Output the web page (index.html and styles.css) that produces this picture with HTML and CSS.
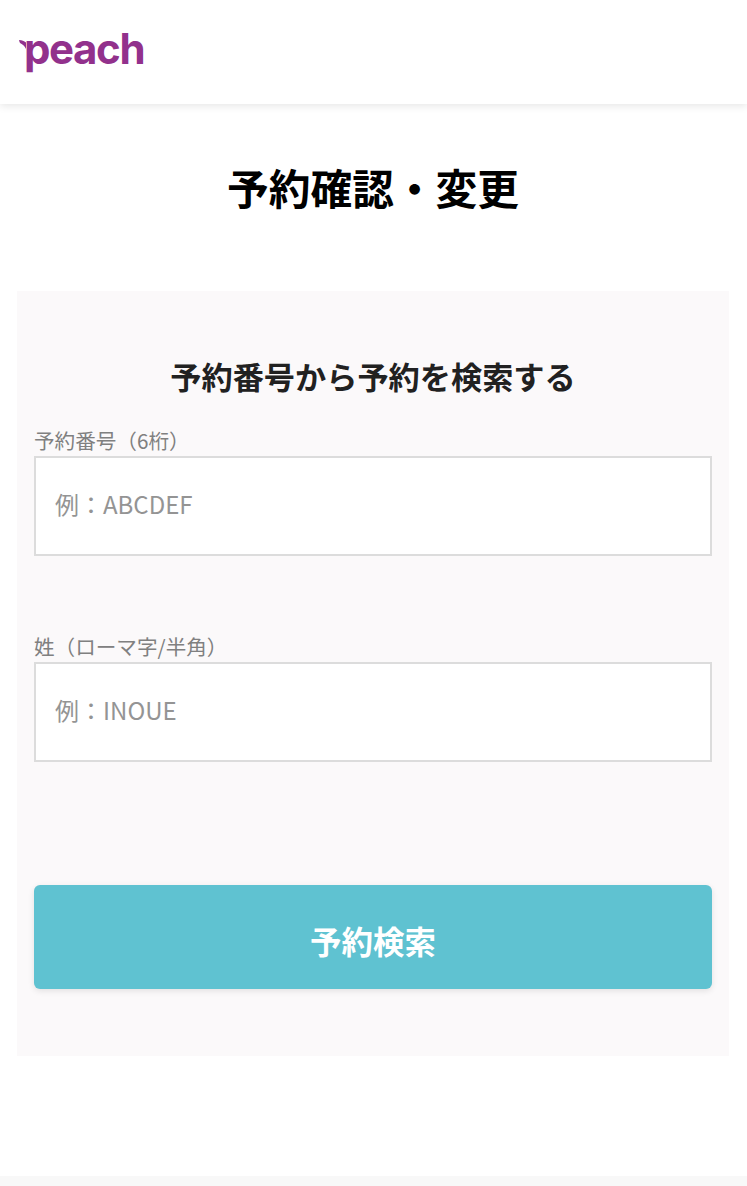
FILE: index.html
```html
<!DOCTYPE html>
<html lang="ja">
<head>
    <meta charset="UTF-8">
    <meta name="viewport" content="width=device-width, initial-scale=1.0">
    <title>予約確認・変更</title>
    <link rel="stylesheet" href="styles.css">
</head>
<body>
    <header class="site-header">
        <a class="logo" href="#">
            <svg class="logo-leaf" width="10" height="9" viewBox="0 0 10 9" aria-hidden="true">
                <path d="M0 0 C3 0 5 1 7 2.5 L7 9 C6 6 3 4 1 3 C0.5 2 0.2 1 0 0 Z" fill="#92318c"/>
            </svg>
            <span class="logo-text">peach</span>
        </a>
    </header>

    <main class="page">
        <h1 class="page-title">予約確認・変更</h1>

        <form class="search-panel">
            <h2 class="panel-title">予約番号から予約を検索する</h2>

            <div class="field">
                <label class="field-label" for="pnr">予約番号（6桁）</label>
                <input class="field-input" id="pnr" type="text" placeholder="例：ABCDEF">
            </div>

            <div class="field field-second">
                <label class="field-label" for="lastName">姓（ローマ字/半角）</label>
                <input class="field-input" id="lastName" type="text" placeholder="例：INOUE">
            </div>

            <button class="search-button" type="button">予約検索</button>
        </form>
    </main>

    <footer class="site-footer"></footer>
</body>
</html>
```

FILE: styles.css
```css
* {
    box-sizing: border-box;
}
body {
    margin: 0;
    background: #fff;
    color: #000;
    font-family: "Noto Sans CJK JP", "Noto Sans", sans-serif;
}
.site-header {
    height: 104px;
    padding: 24px 0 0 19px;
    background: #fff;
    box-shadow: 0 2px 8px rgba(0,0,0,0.1);
}
.logo {
    display: flex;
    align-items: flex-start;
    color: #92318c;
    text-decoration: none;
}
.logo-leaf {
    margin-top: 16px;
    flex: none;
}
.logo-text {
    margin-left: -5px;
    font-family: "Inter", sans-serif;
    font-size: 42px;
    line-height: 50px;
    font-weight: 700;
    letter-spacing: -1.4px;
}
.page {
    padding: 0 18px 0 17px;
}
.page-title {
    margin: 0;
    padding-top: 53px;
    height: 187px;
    font-size: 41.7px;
    line-height: 60px;
    font-weight: 700;
    text-align: center;
}
.search-panel {
    height: 765px;
    padding: 60px 17px 0;
    background: #fbf9fa;
}
.panel-title {
    margin: 0 0 26px;
    font-size: 31.2px;
    line-height: 50px;
    font-weight: 700;
    color: #212121;
    text-align: center;
}
.field-label {
    display: block;
    font-size: 20.6px;
    line-height: 27px;
    padding-bottom: 2px;
    color: #808080;
}
.field-input {
    display: block;
    width: 100%;
    height: 100px;
    padding: 0 19px 6px;
    border: 2px solid #dcdcdc;
    border-radius: 0;
    background: #fff;
    font-family: inherit;
    font-size: 24px;
}
.field-input::placeholder {
    color: #949494;
    opacity: 1;
}
.field-second {
    margin-top: 77px;
}
.search-button {
    display: block;
    width: 100%;
    height: 104px;
    margin-top: 123px;
    padding: 5px 0 0;
    border: none;
    border-radius: 6px;
    background: #5fc2d1;
    box-shadow: 0 2px 6px rgba(0,0,0,0.1);
    color: #fff;
    font-family: inherit;
    font-size: 31.5px;
    font-weight: 700;
}
.site-footer {
    height: 10px;
    margin-top: 120px;
    background: #f8f8f8;
}
```
